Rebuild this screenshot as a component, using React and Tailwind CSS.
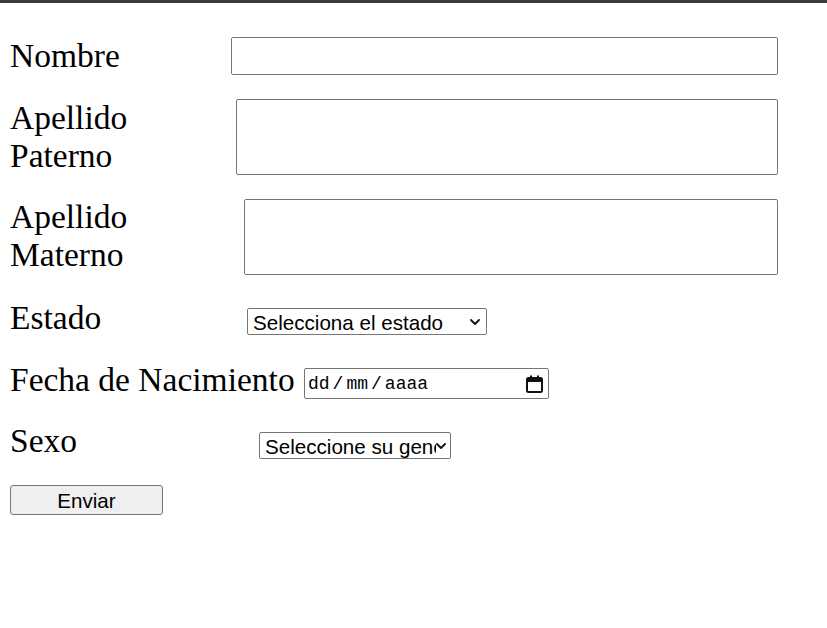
import React from 'react'

const labelCls = "shrink-0 text-[33.5px] leading-[38px] text-black"

function Chevron() {
  return (
    <svg width="10" height="6" viewBox="0 0 10 6" className="shrink-0">
      <path d="M1 1l4 4 4-4" fill="none" stroke="#111" strokeWidth="1.8" strokeLinecap="round" strokeLinejoin="round" />
    </svg>
  )
}

function FakeSelect({ text, width, className, pr = "pr-[6px]" }) {
  return (
    <div
      className={"flex h-[27px] items-center rounded-[2px] border border-[#767676] bg-white pl-[5px] " + pr + " " + className}
      style={{ width }}
    >
      <span className="min-w-0 flex-1 overflow-hidden whitespace-nowrap pt-[2px] text-[20.6px] leading-[23px] text-black [font-family:'Liberation_Sans',Arial,sans-serif]">
        {text}
      </span>
      <Chevron />
    </div>
  )
}

function CalendarIcon() {
  return (
    <svg width="17" height="18" viewBox="0 0 17 18">
      <rect x="1" y="3" width="15" height="14" rx="1.5" fill="none" stroke="#111" strokeWidth="2" />
      <rect x="1" y="3" width="15" height="4" fill="#111" />
      <rect x="4" y="0.5" width="2" height="3" fill="#111" />
      <rect x="11" y="0.5" width="2" height="3" fill="#111" />
    </svg>
  )
}

export default function App() {
  return (
    <div className="min-h-screen border-t-[3px] border-[#3a3a3a] bg-white [font-family:'Liberation_Serif','Times_New_Roman',serif]">
      <form className="pl-[10px] pt-[34px]" onSubmit={(e) => e.preventDefault()}>
        {/* Nombre */}
        <div className="flex items-start">
          <label className={labelCls + " w-[221px]"}>Nombre</label>
          <input className="h-[38px] w-[547px] rounded-[2px] border border-[#767676] bg-white" />
        </div>

        {/* Apellido Paterno */}
        <div className="mt-[24px] flex items-start">
          <label className={labelCls + " w-[226px]"}>
            <span className="block max-w-[180px]">Apellido Paterno</span>
          </label>
          <textarea className="h-[76px] w-[542px] resize-none rounded-[2px] border border-[#767676] bg-white" />
        </div>

        {/* Apellido Materno */}
        <div className="mt-[23px] flex items-start">
          <label className={labelCls + " w-[234px]"}>
            <span className="block max-w-[180px]">Apellido Materno</span>
          </label>
          <textarea className="mt-[1px] h-[76px] w-[534px] resize-none rounded-[2px] border border-[#767676] bg-white" />
        </div>

        {/* Estado */}
        <div className="mt-[24px] flex items-start">
          <label className={labelCls + " w-[237px]"}>Estado</label>
          <FakeSelect text="Selecciona el estado" width={240} className="mt-[9px]" />
        </div>

        {/* Fecha de Nacimiento */}
        <div className="mt-[24px] flex items-start">
          <label className={labelCls + " w-[294px]"}>Fecha de Nacimiento</label>
          <div className="mt-[7px] flex h-[31px] w-[245px] items-center justify-between rounded-[2px] border border-[#767676] bg-white pl-[3px] pr-[5px]">
            <span className="text-[18px] leading-[22px] text-black [font-family:'Liberation_Mono','DejaVu_Sans_Mono',monospace]">
              dd<span className="mx-[3px]">/</span>mm<span className="mx-[3px]">/</span>aaaa
            </span>
            <CalendarIcon />
          </div>
        </div>

        {/* Sexo */}
        <div className="mt-[23px] flex items-start">
          <label className={labelCls + " w-[249px]"}>Sexo</label>
          <FakeSelect text="Seleccione su genero" width={192} className="mt-[10px]" pr="pr-[4px]" />
        </div>

        <button
          type="submit"
          className="mt-[25px] flex h-[30px] w-[153px] items-center justify-center rounded-[3px] border border-[#767676] bg-[#efefef] text-[20.6px] leading-[23px] text-black [font-family:'Liberation_Sans',Arial,sans-serif]"
        >
          Enviar
        </button>
      </form>
    </div>
  )
}
